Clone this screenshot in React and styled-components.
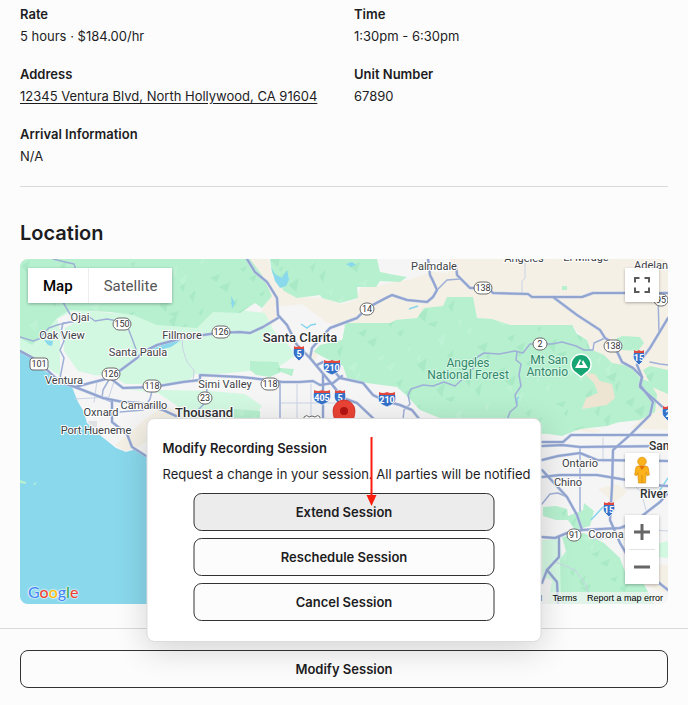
import React from "react";
import styled, { createGlobalStyle } from "styled-components";

const GlobalStyle = createGlobalStyle`
  *, *::before, *::after { box-sizing: border-box; }
  body {
    margin: 0;
    background: #fcfcfc;
    color: #1d1d1f;
    font-family: Inter, "Liberation Sans", sans-serif;
    font-size: 13px;
    line-height: 22px;
  }
`;

const Page = styled.div`
  position: relative;
`;

const Content = styled.main`
  padding: 3px 20px 24px;
`;

const Details = styled.dl`
  margin: 0;
  padding-bottom: 19px;
  border-bottom: 1px solid #d9d9d9;
  display: grid;
  grid-template-columns: 1fr 1fr;
  column-gap: 20px;
  row-gap: 16px;
`;

const Detail = styled.div``;

const Term = styled.dt`
  font-weight: 600;
`;

const Value = styled.dd`
  margin: 0;
`;

const AddressLink = styled.a`
  color: inherit;
  text-decoration: underline;
  text-underline-offset: 2px;
`;

const SectionTitle = styled.h2`
  margin: 30px 0 10px;
  font-size: 20px;
  line-height: 32px;
  font-weight: 600;
`;

const MapFrame = styled.section`
  position: relative;
  height: 345px;
  border-radius: 8px;
  overflow: hidden;
  font-family: Roboto, sans-serif;
`;

const MapCanvas = styled.svg`
  display: block;
  width: 100%;
  height: 100%;
`;

const MapTypes = styled.div`
  position: absolute;
  top: 9px;
  left: 8px;
  display: flex;
  background: #fff;
  box-shadow: 0 1px 3px rgba(0, 0, 0, 0.3);
`;

const MapTypeButton = styled.button`
  height: 35px;
  padding: 0 15px;
  border: 0;
  border-left: ${(p) => (p.$active ? "0" : "1px solid #eeeeee")};
  background: #fff;
  color: ${(p) => (p.$active ? "#000" : "#565656")};
  font: ${(p) => (p.$active ? 500 : 400)} 15px Roboto, sans-serif;
`;

const RightControls = styled.div`
  position: absolute;
  top: 9px;
  right: 9px;
  bottom: 20px;
  display: flex;
  flex-direction: column;
  justify-content: space-between;
`;

const ControlGroup = styled.div`
  display: flex;
  flex-direction: column;
  gap: 28px;
`;

const MapControl = styled.button`
  display: grid;
  place-items: center;
  width: 34px;
  height: 34px;
  padding: 0;
  border: 0;
  border-radius: 1px;
  background: #fff;
  box-shadow: ${(p) => (p.$flat ? "none" : "0 1px 3px rgba(0, 0, 0, 0.3)")};
`;

const ZoomControls = styled.div`
  background: #fff;
  box-shadow: 0 1px 3px rgba(0, 0, 0, 0.3);
`;

const ZoomRule = styled.hr`
  height: 1px;
  margin: 0 4px;
  border: 0;
  background: #e3e3e3;
`;

const GoogleMark = styled.a`
  position: absolute;
  left: 8px;
  bottom: 2px;
  font: 500 16px/20px Lato, sans-serif;
  text-decoration: none;
  text-shadow: 0 0 2px #fff, 0 0 1px #fff, 0 0 2px #fff;
`;

const Letter = styled.span`
  color: ${(p) => p.$color};
`;

const Attribution = styled.div`
  position: absolute;
  right: 0;
  bottom: 0;
  display: flex;
  gap: 10px;
  padding: 0 5px;
  background: rgba(245, 245, 245, 0.7);
  font: 9px/12px "Liberation Sans", sans-serif;
  color: #000;
`;

const AttributionLink = styled.a`
  color: inherit;
  text-decoration: none;
`;

const Footer = styled.footer`
  padding: 21px 20px 17px;
  border-top: 1px solid #d9d9d9;
`;

const ActionButton = styled.button`
  display: block;
  width: 100%;
  height: 38px;
  padding: 0 16px;
  border: 1px solid #333;
  border-radius: 8px;
  background: ${(p) => (p.$highlighted ? "#ececec" : "#fcfcfc")};
  color: inherit;
  font: 600 13px Inter, "Liberation Sans", sans-serif;
`;

const Popover = styled.div`
  position: absolute;
  left: 50%;
  bottom: 63px;
  transform: translateX(-50%);
  width: min(395px, 100%);
  padding: 18px 8px 20px 15px;
  border: 1px solid #dcdcdc;
  border-radius: 8px;
  background: #fff;
  box-shadow: 0 8px 32px rgba(0, 0, 0, 0.16);
`;

const PopoverTitle = styled.h3`
  margin: 0 0 4px;
  font-size: 13px;
  line-height: 22px;
  font-weight: 600;
`;

const PopoverText = styled.p`
  margin: 0 0 8px;
`;

const Actions = styled.div`
  display: flex;
  flex-direction: column;
  gap: 7px;
  padding: 0 38px 0 31px;
`;

const Arrow = styled.svg`
  position: absolute;
  top: 18px;
  left: 218px;
`;

const details = [
  ["Rate", "5 hours · $184.00/hr"],
  ["Time", "1:30pm - 6:30pm"],
  ["Address", "12345 Ventura Blvd, North Hollywood, CA 91604", true],
  ["Unit Number", "67890"],
  ["Arrival Information", "N/A"],
];

const forests = [
  "20,259 250,259 262,275 272,296 262,308 255,303 240,313 213,312 197,328 157,325 133,315 110,312 70,310 57,318 43,335 32,345 20,338",
  "270,259 377,259 380,272 395,275 407,277 400,282 380,281 376,287 357,287 358,298 340,303 322,298 320,295 297,298 284,291 272,273",
  "343,327 347,323 390,323 396,320 417,318 424,308 443,306 447,297 473,297 477,318 492,319 510,325 572,325 577,334 587,340 590,349 604,355 612,363 630,366 640,378 650,382 657,395 655,412 640,420 593,425 543,434 457,425 420,410 407,396 397,387 367,383 347,378 343,366 325,358 314,352 315,344 335,342 343,338",
  "612,341 622,336 640,337 644,343 638,351 622,350 614,347",
  "643,370 650,366 668,370 668,394 652,387",
  "250,361 278,362 280,368 294,369 292,376 281,372 270,377 256,375 250,370",
  "234,409 260,411 260,425 234,425",
  "543,507 556,506 567,509 568,516 583,510 584,503 594,511 590,526 575,530 568,520 556,520 543,516",
  "562,537 584,533 604,543 620,558 628,580 644,584 654,604 561,604 560,560 566,551",
  "542,433 552,420 625,420 607,426 580,429 562,436",
];

const meadows = [
  "20,300 72,310 140,315 180,311 213,312 240,310 265,313 274,331 290,347 296,355 277,368 250,371 218,374 196,374 187,382 160,384 125,384 110,374 94,376 68,380 49,369 38,364 20,350",
  "125,389 165,390 210,391 245,394 262,406 250,423 190,424 176,405 158,393",
  "542,540 560,539 567,604 548,604 552,580 542,577",
  "652,545 668,541 668,558 658,557",
];

const sands = [
  "110,259 168,259 162,265 153,267 145,261",
  "250,259 268,259 273,277 288,292 300,297 322,298 342,304 358,299 360,288 377,286 395,282 412,279 430,272 448,273 450,259 668,259 668,430 630,428 657,405 650,382 600,358 572,325 510,325 477,318 473,297 447,297 443,308 417,318 390,323 343,325 330,335 304,318 290,308 272,325 262,327 262,310 268,300",
  "151,351 174,343 182,329 205,326 230,322 222,335 192,340 166,347",
  "193,355 202,368 192,370",
  "144,420 165,405 184,417 175,426 151,438 138,447 125,451 115,445",
  "313,342 318,355 315,362 304,352",
  "556,428 570,426 602,430 595,433",
  "598,489 617,484 627,492 614,503",
  "635,563 668,565 668,594 648,587 636,575",
];

const peaks = ["584,373 595,374 600,381 612,384 615,398 607,405 582,409 586,398 598,393 594,383"];

const lightLand = [
  "57,319 73,311 81,313 76,322 65,328 64,351 78,371 98,376 92,383 65,380 60,375 60,330",
  "274,307 302,304 327,323 345,326 342,340 320,345 312,353 301,351 285,330",
];

const waters = [
  "20,352 30,358 40,369 51,374 61,379 72,387 78,402 84,412 87,423 101,436 116,448 126,452 136,449 148,458 148,604 20,604",
  "271,267 275,274 282,278 287,270 289,280 286,286 280,288 275,281",
  "44,340 53,341 52,346 48,345",
  "231,296 235,303 232,309",
  "346,264 352,262 356,265 351,267",
  "152,349 171,342 180,341 171,347 155,351",
];

const highways = [
  "20,351 33,358 47,370 60,382 75,387 90,383 110,378 137,358 143,352 157,345 183,338 217,333 240,332 250,333 263,327 278,318",
  "75,387 103,398 123,402 140,403 163,410 176,416",
  "247,259 255,272 267,282 277,298 278,315 287,325 297,345 310,358 330,382 343,398 357,403 375,420",
  "310,358 312,348 330,328 357,318 367,308 384,299 392,295 407,300 427,302 433,297 437,290 433,281 430,275 428,259",
  "110,378 123,388 153,387 183,382 200,380 200,375 240,377 270,380 282,382 300,382 313,381 320,385 333,383 342,376",
  "317,365 323,362 330,366 340,378 363,383 373,395 385,401 400,405 412,410 420,420",
  "323,375 323,420",
  "456,265 457,275 470,288 488,288 493,293 528,294 532,297 582,297 593,293 668,293",
  "553,297 577,315 600,330 605,338 613,343 622,362 633,368 642,377 640,387 657,402 668,412",
  "668,318 650,348 637,365 642,377 640,385 653,402 650,415 630,435 613,450 612,487 610,520 620,543 630,560 668,590",
  "542,442 563,442 571,435 668,435",
  "542,446 562,445 580,447 668,446",
  "542,460 558,456 580,453 597,460 668,461",
  "542,477 560,475 597,475 627,480 650,485 668,486",
  "542,470 567,497 577,515 582,530 567,533 555,538 542,537",
  "582,530 620,528 633,523 647,512 660,502 668,493",
  "559,537 559,557 547,570 542,583",
  "547,570 557,582 558,604",
  "112,402 112,422 127,434 132,447 146,456",
];

const byways = [
  "53,259 65,262 74,264 78,276 60,297 67,309 73,319",
  "78,320 88,316 95,321 107,319 118,321 128,328 133,341 137,352",
  "73,322 63,323 61,332 64,341 60,350 64,358 60,378",
  "70,322 57,325 49,328 44,333 39,339 33,341 20,337",
  "110,378 103,390 102,398 112,402",
  "153,387 150,399 143,410 120,412",
  "207,388 206,402 198,410",
  "650,362 660,364 668,365",
  "437,290 447,280 460,279",
  "403,420 404,410 410,404 408,395 411,389 423,385 433,386 444,382 455,386 467,375 474,367 474,359 484,353 499,354 515,351 523,353 530,344 552,344 562,342 576,346 584,350 593,350 594,343 605,338",
  "517,352 516,360 521,364 519,375 521,386 515,395 517,406 510,412 507,420",
  "280,382 280,420",
  "580,447 580,511",
  "542,504 550,494 558,493 567,497",
  "658,295 659,333",
];

const streets = [
  "525,259 525,278 522,281 522,293",
  "182,338 183,350 187,362 194,370 193,382",
  "297,384 297,420",
  "311,384 311,420",
  "281,403 340,403",
  "603,438 603,462",
  "627,478 641,492 646,510",
  "618,528 668,531",
  "594,539 617,538 635,540",
  "97,381 94,402",
  "75,399 109,397 115,378",
  "553,561 575,570 586,585 589,600",
];

// Deterministic facets that give the wooded areas their shaded relief.
const facets = Array.from({ length: 520 }, (_, i) => {
  const x = 20 + ((i * 137) % 648);
  const y = 259 + ((i * 89) % 345);
  const w = 5 + (i % 7);
  const h = 3 + (i % 5);
  return { points: `${x},${y} ${x + w},${y - h} ${x + w - 3},${y + h}`, dark: i % 3 !== 0 };
});

const towns = [
  ["Ojai", 80, 321], ["Oak View", 62, 339], ["Fillmore", 182, 339], ["Santa Paula", 138, 356],
  ["Ventura", 64, 384], ["Camarillo", 144, 409], ["Oxnard", 101, 416], ["Port Hueneme", 96, 434],
  ["Simi Valley", 225, 388], ["Palmdale", 434, 270], ["Angeles", 524, 262], ["El Mirage", 586, 261],
  ["Adelan", 651, 269], ["Ontario", 580, 467], ["Chino", 568, 486], ["Corona", 606, 538],
];

const routes = [
  ["150", 122, 324], ["126", 221, 332], ["126", 111, 374], ["118", 152, 386], ["118", 270, 384],
  ["23", 205, 398], ["14", 367, 309], ["138", 483, 288], ["2", 540, 344], ["138", 613, 346],
  ["91", 574, 535], ["95", 661, 300], ["101", 39, 364],
];

const interstates = [
  ["5", 299, 353], ["210", 332, 367], ["405", 322, 397], ["5", 340, 397], ["210", 387, 399],
  ["15", 639, 357], ["15", 609, 509], ["2", 668, 413],
];

const Lines = ({ items, color, width }) => (
  <g fill="none" stroke={color} strokeWidth={width} strokeLinejoin="round" strokeLinecap="round">
    {items.map((points) => <polyline key={points} points={points} />)}
  </g>
);

const Areas = ({ items, color }) => (
  <g fill={color}>
    {items.map((points) => <polygon key={points} points={points} />)}
  </g>
);

const RouteShield = ({ label, x, y }) => {
  const width = label.length === 3 ? 18 : 14;
  return (
    <g>
      <rect x={x - width / 2} y={y - 6} width={width} height={12} rx={label === "101" ? 3 : 6} fill="#fff" stroke="#6d6d6d" />
      <text x={x} y={y + 3} fontSize="9" textAnchor="middle" fill="#333">{label}</text>
    </g>
  );
};

const InterstateShield = ({ label, x, y }) => {
  const w = label.length === 3 ? 8 : 5;
  return (
    <g>
      <path
        d={`M${x - w} ${y - 6} L${x + w} ${y - 6} Q${x + w + 2} ${y + 1} ${x + w - 1} ${y + 4} Q${x + w - 3} ${y + 6} ${x} ${y + 8} Q${x - w + 3} ${y + 6} ${x - w + 1} ${y + 4} Q${x - w - 2} ${y + 1} ${x - w} ${y - 6}Z`}
        fill="#3671c8" stroke="#fff" strokeWidth="0.7"
      />
      <path d={`M${x - w} ${y - 7} Q${x - w / 2} ${y - 5} ${x} ${y - 7} Q${x + w / 2} ${y - 5} ${x + w} ${y - 7} V${y - 4} H${x - w}Z`} fill="#e0483e" />
      <text x={x} y={y + 4} fontSize="9" fontWeight="700" textAnchor="middle" fill="#fff">{label}</text>
    </g>
  );
};

const halo = { stroke: "#fff", strokeWidth: 2, strokeLinejoin: "round", paintOrder: "stroke" };

const AreaMap = () => (
  <MapCanvas viewBox="20 259 648 345" preserveAspectRatio="xMidYMid slice" role="img" aria-label="Map of the Los Angeles area">
    <defs>
      <clipPath id="woods">
        {forests.map((points) => <polygon key={points} points={points} />)}
      </clipPath>
    </defs>
    <rect x="20" y="259" width="648" height="345" fill="#f5f5f5" />
    <Areas items={sands} color="#f5f0e5" />
    <Areas items={meadows} color="#d3f8e2" />
    <Areas items={forests} color="#b6f0cf" />
    <g clipPath="url(#woods)">
      {facets.map((f) => (
        <polygon key={f.points} points={f.points} fill={f.dark ? "#8fd9b0" : "#d0f8e0"} opacity="0.3" />
      ))}
    </g>
    <Areas items={peaks} color="#eee4d2" />
    <Areas items={lightLand} color="#f5f5f5" />
    <Areas items={waters} color="#8ad8ec" />
    <path d="M20 480l6 2v2l-6-1z M33 484l4-2-2 3z" fill="#b6f0cf" />
    <path d="M88 421h9v9h-5z" fill="#dfe1e5" />
    <rect x="562" y="286" width="5" height="4" fill="#b6f0cf" />
    <path d="M301 324l6 4 4-3 5-1M409 309l9-3M517 404v-5l2-2M591 520l12-13M656 496l12-18" fill="none" stroke="#86d5ec" strokeWidth="1.5" />
    <Lines items={streets} color="#c9d3e4" width={1} />
    <Lines items={byways} color="#9fb0d7" width={1.5} />
    <Lines items={highways} color="#c3cee8" width={3} />
    <Lines items={highways} color="#91a4cf" width={2} />

    {routes.map(([label, x, y]) => <RouteShield key={`${x}-${y}`} label={label} x={x} y={y} />)}
    <path d="M304 421v-4q3-3 5 0q3-2 6 0q3-3 5 0v4" fill="#fff" stroke="#6d6d6d" />
    {interstates.map(([label, x, y]) => <InterstateShield key={`${x}-${y}`} label={label} x={x} y={y} />)}

    <g fill="#3c4043" fontSize="11" textAnchor="middle" {...halo}>
      {towns.map(([name, x, y]) => <text key={name} x={x} y={y}>{name}</text>)}
    </g>
    <g fill="#2f3133" fontSize="13" fontWeight="500" {...halo}>
      <text x="300" y="342" textAnchor="middle">Santa Clarita</text>
      <text x="204" y="417" textAnchor="middle">Thousand</text>
      <text x="649" y="450" fontSize="12">San</text>
      <text x="640" y="498" fontSize="12">River</text>
    </g>
    <g fill="#33866b" fontSize="12" {...halo} stroke="#d5f7e4">
      <text x="468" y="367" textAnchor="middle">Angeles</text>
      <text x="468" y="379" textAnchor="middle">National Forest</text>
      <text x="568" y="364" textAnchor="end">Mt San</text>
      <text x="568" y="376" textAnchor="end">Antonio</text>
    </g>

    <path d="M581 377l-5-4a10 10 0 1 1 10 0z" fill="#17a673" stroke="#fff" strokeWidth="1.5" />
    <path d="M575 368l5-9 2 3 1-2 5 8z" fill="#fff" />
    <path d="M581 360l-2 5h4z" fill="#17a673" />
    <path d="M344 437c-1-8-11-14-11-26a11 11 0 0 1 22 0c0 12-10 18-11 26z" fill="#ea4335" stroke="#c5221f" strokeWidth="0.7" />
    <circle cx="344" cy="411" r="4" fill="#b31412" />
  </MapCanvas>
);

const FullscreenIcon = () => (
  <svg width="16" height="16" viewBox="0 0 16 16" fill="none" stroke="#5a5a5a" strokeWidth="2" aria-hidden="true">
    <path d="M1 5.500V1h4.500M10.500 1H15v4.500M15 10.500V15h-4.500M5.500 15H1v-4.500" />
  </svg>
);

const PegmanIcon = () => (
  <svg width="16" height="28" viewBox="0 0 16 28" aria-hidden="true">
    <path d="M4 10h8q2 0 2.500 3l.8 6-2.300.5-.8-3-.7 10.500H4.500L3.800 16.500l-.8 3L.7 19l.8-6Q2 10 4 10z" fill="#fbb21b" stroke="#d98f12" strokeWidth="0.7" />
    <path d="M8 19v8" stroke="#d98f12" strokeWidth="1" />
    <path d="M5 10l3 4 3-4z" fill="#e8710a" />
    <circle cx="8" cy="5.500" r="4.300" fill="#fbb21b" stroke="#d98f12" strokeWidth="0.7" />
  </svg>
);

const ZoomIcon = ({ plus }) => (
  <svg width="16" height="16" viewBox="0 0 16 16" stroke="#666" strokeWidth="3" aria-hidden="true">
    <path d={plus ? "M0 8h16M8 0v16" : "M0 8h16"} />
  </svg>
);

const googleLetters = [
  ["G", "#4285f4"], ["o", "#ea4335"], ["o", "#fbbc05"], ["g", "#4285f4"], ["l", "#34a853"], ["e", "#ea4335"],
];

export default function App() {
  return (
    <Page>
      <GlobalStyle />
      <Content>
        <Details>
          {details.map(([term, value, linked]) => (
            <Detail key={term}>
              <Term>{term}</Term>
              <Value>{linked ? <AddressLink href="#location">{value}</AddressLink> : value}</Value>
            </Detail>
          ))}
        </Details>
        <SectionTitle id="location">Location</SectionTitle>
        <MapFrame aria-labelledby="location">
          <AreaMap />
          <MapTypes>
            <MapTypeButton type="button" $active>Map</MapTypeButton>
            <MapTypeButton type="button">Satellite</MapTypeButton>
          </MapTypes>
          <GoogleMark href="#google" aria-label="Google">
            {googleLetters.map(([letter, color], i) => <Letter key={i} $color={color}>{letter}</Letter>)}
          </GoogleMark>
          <Attribution>
            <span>INEGI</span>
            <AttributionLink href="#terms">Terms</AttributionLink>
            <AttributionLink href="#report">Report a map error</AttributionLink>
          </Attribution>
          <RightControls>
            <MapControl type="button" aria-label="Toggle fullscreen view"><FullscreenIcon /></MapControl>
            <ControlGroup>
              <MapControl type="button" aria-label="Street View"><PegmanIcon /></MapControl>
              <ZoomControls>
                <MapControl type="button" aria-label="Zoom in" $flat><ZoomIcon plus /></MapControl>
                <ZoomRule />
                <MapControl type="button" aria-label="Zoom out" $flat><ZoomIcon /></MapControl>
              </ZoomControls>
            </ControlGroup>
          </RightControls>
        </MapFrame>
      </Content>
      <Footer>
        <ActionButton type="button">Modify Session</ActionButton>
      </Footer>
      <Popover role="dialog" aria-labelledby="modify-title">
        <PopoverTitle id="modify-title">Modify Recording Session</PopoverTitle>
        <PopoverText>Request a change in your session. All parties will be notified</PopoverText>
        <Actions>
          <ActionButton type="button" $highlighted>Extend Session</ActionButton>
          <ActionButton type="button">Reschedule Session</ActionButton>
          <ActionButton type="button">Cancel Session</ActionButton>
        </Actions>
        <Arrow width="12" height="70" viewBox="0 0 12 70" aria-hidden="true">
          <path d="M6 0v60" stroke="#fb1d0d" strokeWidth="2" />
          <path d="M1 58h10L6 69z" fill="#fb1d0d" />
        </Arrow>
      </Popover>
    </Page>
  );
}
